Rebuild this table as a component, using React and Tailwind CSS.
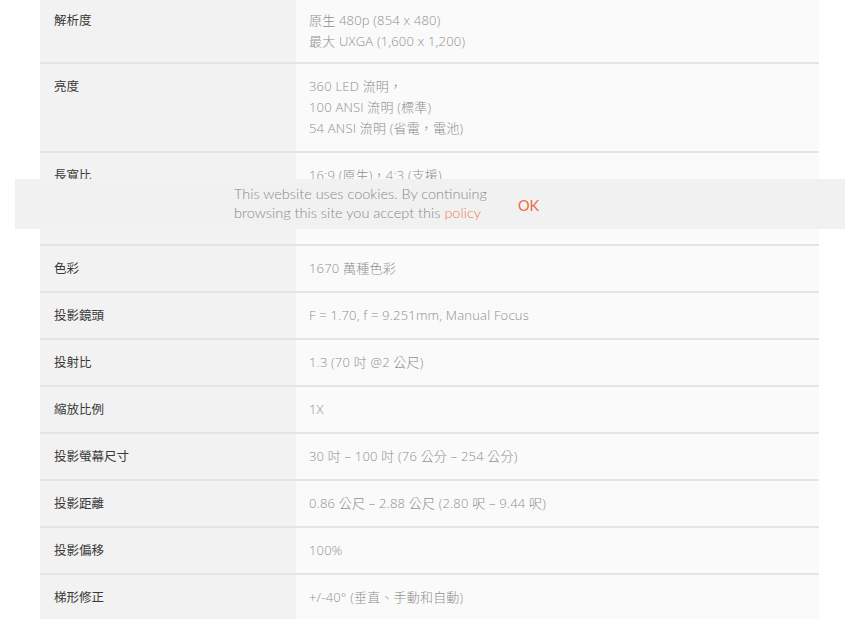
const specs = [
  { label: '解析度', values: ['原生 480p (854 x 480)', '最大 UXGA (1,600 x 1,200)'], first: true },
  { label: '亮度', values: ['360 LED 流明，', '100 ANSI 流明 (標準)', '54 ANSI 流明 (省電，電池)'] },
  { label: '長寬比', values: ['16:9 (原生)，4:3 (支援)', '', ''], tall: true },
  { label: '色彩', values: ['1670 萬種色彩'] },
  { label: '投影鏡頭', values: ['F = 1.70, f = 9.251mm, Manual Focus'] },
  { label: '投射比', values: ['1.3 (70 吋 @2 公尺)'] },
  { label: '縮放比例', values: ['1X'] },
  { label: '投影螢幕尺寸', values: ['30 吋 – 100 吋 (76 公分 – 254 公分)'] },
  { label: '投影距離', values: ['0.86 公尺 – 2.88 公尺 (2.80 呎 – 9.44 呎)'] },
  { label: '投影偏移', values: ['100%'] },
  { label: '梯形修正', values: ['+/-40° (垂直、手動和自動)'] },
];

const SpecRow = ({ spec }) => (
  <div
    className={`flex border-b-2 border-[#e4e4e4] ${spec.first ? 'pt-[10px] pb-[10px]' : 'pt-3'} ${
      spec.tall ? 'pb-[16px]' : spec.first ? '' : 'pb-3'
    }`}
  >
    <div className="w-[256px] shrink-0 pl-[14px] text-[12.5px] leading-[21px] text-[#383838]">{spec.label}</div>
    <div
      className="flex-1 pl-[13px] text-[13px] leading-[21px] tracking-[0.2px] text-[#8f8f8f] font-light"
      style={{ fontFamily: '"Open Sans", "Noto Sans CJK TC", sans-serif' }}
    >
      {spec.values.map((v, i) => (
        <div key={i} className="h-[21px]">
          {v}
        </div>
      ))}
    </div>
  </div>
);

export default function App() {
  return (
    <div
      className="relative w-[860px] h-[619px] overflow-hidden bg-white"
      style={{ fontFamily: 'Roboto, "Noto Sans CJK TC", sans-serif' }}
    >
      <div className="ml-[40px] w-[779px] bg-[linear-gradient(to_right,#f2f2f2_256px,#fafafa_256px)]">
        {specs.map((spec) => (
          <SpecRow key={spec.label} spec={spec} />
        ))}
      </div>

      <div className="absolute left-[15px] right-[15px] top-[179px] h-[50px] bg-[#f1f1f1] flex items-center">
        <div
          className="ml-[219px] mb-[2px] text-[14.5px] leading-[19px] text-[#8a8a8a] font-light"
          style={{ fontFamily: 'Lato, "Liberation Sans", sans-serif' }}
        >
          <div>This website uses cookies. By continuing</div>
          <div>
            browsing this site you accept this <span className="text-[#f07a55]">policy</span>
          </div>
        </div>
        <div
          className="ml-[31px] mt-[3px] text-[14.5px] text-[#ee6a43]"
          style={{ fontFamily: 'Lato, "Liberation Sans", sans-serif' }}
        >
          OK
        </div>
      </div>
    </div>
  );
}
